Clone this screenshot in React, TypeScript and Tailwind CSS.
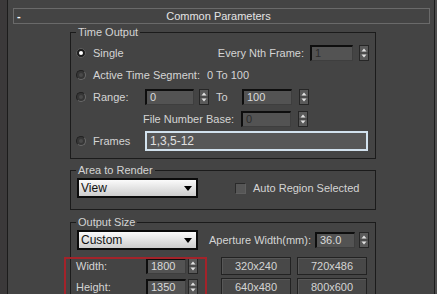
import React from 'react';

function Spinner() {
  return (
    <div className="w-[10px] h-[16px] shrink-0 border border-[#262626] bg-[#5a5a5a] flex items-center justify-center">
      <svg width="8" height="14" viewBox="0 0 8 14">
        <path d="M1.5 5.5 L4 2.5 L6.5 5.5 Z" fill="#e2e2e2" />
        <line x1="0" y1="7" x2="8" y2="7" stroke="#3c3c3c" />
        <path d="M1.5 8.5 L4 11.5 L6.5 8.5 Z" fill="#e2e2e2" />
      </svg>
    </div>
  );
}

function Field({ value, w, dim }: { value: string; w: string; dim?: boolean }) {
  return (
    <div
      className={`${w} h-[16px] shrink-0 bg-[#535353] border-t-2 border-l-2 border-r border-b border-[#0e0e0e] border-r-[#3e3e3e] border-b-[#3e3e3e] pl-[3px] leading-[13px] ${
        dim ? 'text-[#2c2c2c]' : 'text-[#dadada]'
      }`}
    >
      {value}
    </div>
  );
}

function Radio({ on }: { on?: boolean }) {
  return (
    <div className="w-[22px] shrink-0 pl-[5px] flex items-center">
      {on ? (
        <div className="w-[10px] h-[10px] rounded-full bg-[#1c1c1c] border border-[#5e5e5e] flex items-center justify-center">
          <div className="w-[4px] h-[4px] rounded-full bg-white" />
        </div>
      ) : (
        <div className="w-[10px] h-[10px] rounded-full bg-[#363636] border border-[#6a6a6a] border-t-[#222] border-l-[#222] flex items-center justify-center">
          <div className="w-[4px] h-[4px] rounded-full bg-[#4a4a4a]" />
        </div>
      )}
    </div>
  );
}

function Dropdown({ label }: { label: string }) {
  return (
    <div className="w-[121px] h-[20px] shrink-0 border-2 border-[#0b0b0b] bg-linear-to-b from-[#fbfbfb] to-[#cdcdcd] flex items-center pl-[2px] pr-[4px] text-[#111] text-[12px]">
      <span className="flex-1">{label}</span>
      <svg width="8" height="5" viewBox="0 0 8 5">
        <path d="M0 0 H8 L4 5 Z" fill="#000" />
      </svg>
    </div>
  );
}

function Group({ title, h, mt, children }: { title: string; h: string; mt: string; children: React.ReactNode }) {
  return (
    <div className={`relative ml-[62px] w-[306px] ${h} ${mt} border border-[#1b1b1b] shrink-0`}>
      <span className="absolute -top-[8px] left-[5px] px-[2px] bg-[#444444] leading-[14px]">{title}</span>
      {children}
    </div>
  );
}

function SizeButton({ label }: { label: string }) {
  return (
    <div className="w-[70px] h-[18px] border border-[#222] bg-[#484848] shadow-[inset_1px_1px_0_#575757] flex items-center justify-center">
      {label}
    </div>
  );
}

export default function App() {
  return (
    <div
      className="relative w-[437px] h-[294px] overflow-hidden bg-[#444444] flex text-[11px] text-[#d4d4d4]"
      style={{ fontFamily: '"Liberation Sans", Arial, sans-serif' }}
    >
      <div className="w-[7px] shrink-0 bg-[#3b393a]" />
      <div className="w-[428px] shrink-0 border-l border-r border-[#1c1c1c] flex flex-col">
        {/* rollout header */}
        <div className="mt-[8px] ml-[5px] w-[417px] h-[16px] shrink-0 border border-[#6a6a6a] flex items-center">
          <span className="w-[10px] pl-[3px] font-bold text-white leading-none">-</span>
          <span className="flex-1 text-center pr-[16px] text-[#e4e4e4]">Common Parameters</span>
        </div>

        <Group title="Time Output" h="h-[127px]" mt="mt-[8px]">
          <div className="flex flex-col pt-[9px]">
            <div className="h-[22px] flex items-center pr-[6px]">
              <Radio on />
              <span>Single</span>
              <span className="ml-auto">Every Nth Frame:</span>
              <div className="ml-[6px]">
                <Field value="1" w="w-[43px]" dim />
              </div>
              <div className="ml-[6px]">
                <Spinner />
              </div>
            </div>
            <div className="h-[22px] flex items-center">
              <Radio />
              <span className="w-[114px]">Active Time Segment:</span>
              <span>0 To 100</span>
            </div>
            <div className="h-[22px] flex items-center">
              <Radio />
              <span className="w-[52px]">Range:</span>
              <Field value="0" w="w-[49px]" />
              <div className="ml-[5px]">
                <Spinner />
              </div>
              <span className="ml-[7px] w-[26px]">To</span>
              <Field value="100" w="w-[50px]" />
              <div className="ml-[7px]">
                <Spinner />
              </div>
            </div>
            <div className="h-[22px] flex items-center">
              <span className="ml-[72px] w-[98px]">File Number Base:</span>
              <Field value="0" w="w-[50px]" dim />
              <div className="ml-[7px]">
                <Spinner />
              </div>
            </div>
            <div className="h-[22px] flex items-center">
              <Radio />
              <span className="w-[52px]">Frames</span>
              <div className="w-[223px] h-[20px] border-2 border-[#d2e2ee] bg-[#575757] pl-[3px] flex items-center text-[#e0e0e0] text-[12px]">
                1,3,5-12
              </div>
            </div>
          </div>
        </Group>

        <Group title="Area to Render" h="h-[40px]" mt="mt-[11px]">
          <div className="mt-[7px] pl-[6px] flex items-center">
            <Dropdown label="View" />
            <div className="ml-[37px] w-[11px] h-[11px] bg-[#565656] border border-[#2a2a2a] border-r-[#5f5f5f] border-b-[#5f5f5f]" />
            <span className="ml-[7px]">Auto Region Selected</span>
          </div>
        </Group>

        <Group title="Output Size" h="h-[90px]" mt="mt-[12px]">
          <div className="mt-[7px] pl-[6px] pr-[6px] flex items-center">
            <Dropdown label="Custom" />
            <span className="ml-auto">Aperture Width(mm):</span>
            <div className="ml-[4px]">
              <Field value="36.0" w="w-[40px]" />
            </div>
            <div className="ml-[4px]">
              <Spinner />
            </div>
          </div>
          <div className="mt-[7px] flex">
            <div className="pl-[5px] flex flex-col gap-[3px]">
              <div className="h-[18px] flex items-center">
                <span className="w-[70px]">Width:</span>
                <Field value="1800" w="w-[40px]" />
                <div className="ml-[2px]">
                  <Spinner />
                </div>
              </div>
              <div className="h-[18px] flex items-center">
                <span className="w-[70px]">Height:</span>
                <Field value="1350" w="w-[40px]" />
                <div className="ml-[2px]">
                  <Spinner />
                </div>
              </div>
            </div>
            <div className="ml-[23px] grid grid-cols-2 gap-x-[6px] gap-y-[3px]">
              <SizeButton label="320x240" />
              <SizeButton label="720x486" />
              <SizeButton label="640x480" />
              <SizeButton label="800x600" />
            </div>
          </div>
        </Group>
      </div>
      <div className="w-[2px] shrink-0 bg-[#4f4f4f]" />

      {/* annotation frame */}
      <div className="absolute left-[64px] top-[257px] w-[143px] h-[60px] border-2 border-[#a3232a]" />
    </div>
  );
}
